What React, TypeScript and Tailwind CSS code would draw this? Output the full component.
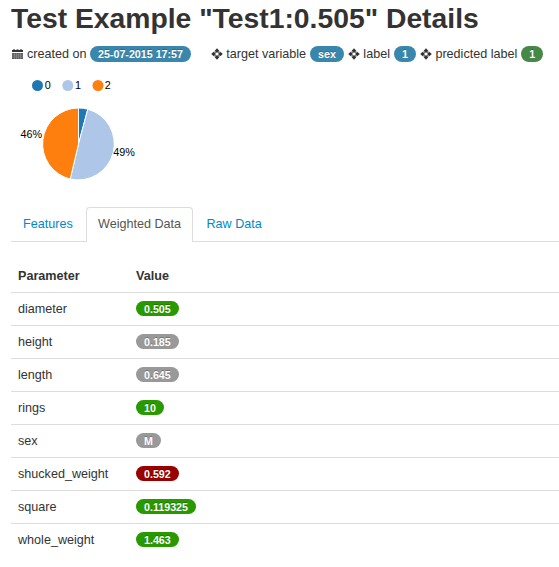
import React from "react";

const rows = [
  { name: "diameter", value: "0.505", color: "bg-[#299900]" },
  { name: "height", value: "0.185", color: "bg-[#999999]" },
  { name: "length", value: "0.645", color: "bg-[#999999]" },
  { name: "rings", value: "10", color: "bg-[#299900]" },
  { name: "sex", value: "M", color: "bg-[#999999]" },
  { name: "shucked_weight", value: "0.592", color: "bg-[#990000]" },
  { name: "square", value: "0.119325", color: "bg-[#299900]" },
  { name: "whole_weight", value: "1.463", color: "bg-[#299900]" },
];

function Badge({ children, className }: { children: React.ReactNode; className: string }) {
  return (
    <span className={`inline-block rounded-full px-2 text-[10.7px] font-bold whitespace-nowrap text-white [text-shadow:0_-1px_0_rgba(0,0,0,0.25)] ${className}`}>
      {children}
    </span>
  );
}

function CalendarIcon() {
  return (
    <svg className="mr-1 h-3 w-[11px] shrink-0" viewBox="0 0 11 12" fill="#333">
      <path d="M1 1h2v1H1zM4.5 1h2v1h-2zM8 1h2v1H8z" fillOpacity=".6" />
      <path d="M0 2h11v2H0z" />
      <path d="M0 5h11v6H0z" fillOpacity=".8" />
      <path d="M2.5 5v6M4.5 5v6M6.5 5v6M8.5 5v6M0 7h11M0 9h11" stroke="#fff" strokeOpacity=".35" strokeWidth=".5" />
    </svg>
  );
}

function MoveIcon() {
  return (
    <svg className="mr-[3.5px] h-3 w-3 shrink-0" viewBox="0 0 12 12" fill="#333">
      <path d="M6 .2l2.3 2.5L6 4.9 3.7 2.7zM6 11.8l2.3-2.5L6 7.1 3.7 9.3zM.2 6l2.5-2.3L4.9 6 2.7 8.3zM11.8 6L9.3 3.7 7.1 6l2.2 2.3z" />
      <path d="M3.5 3.5l1.5 1.5M8.5 3.5L7 5M3.5 8.5L5 7M8.5 8.5L7 7" stroke="#333" strokeOpacity=".65" strokeWidth="1.1" />
    </svg>
  );
}

function Pie() {
  return (
    <svg className="block h-[118px] w-[200px] text-[10.8px]" viewBox="0 74 200 118">
      <circle cx="37.5" cy="85.5" r="5.5" fill="#1f77b4" />
      <circle cx="67.8" cy="85.5" r="5.5" fill="#aec7e8" />
      <circle cx="98" cy="85.5" r="5.5" fill="#ff7f0e" />
      <text x="44.7" y="89">0</text>
      <text x="75" y="89">1</text>
      <text x="104.7" y="89">2</text>
      <g stroke="#fff" strokeWidth="1">
        <path d="M78.5 144V108A36 36 0 0 1 87.8 109.2Z" fill="#1f77b4" />
        <path d="M78.5 144L87.8 109.2A36 36 0 0 1 70.2 179Z" fill="#aec7e8" />
        <path d="M78.5 144L70.2 179A36 36 0 0 1 78.5 108Z" fill="#ff7f0e" />
      </g>
      <text x="20.5" y="138">46%</text>
      <text x="113.3" y="156">49%</text>
    </svg>
  );
}

export default function App() {
  return (
    <div className="h-[567px] w-full overflow-hidden bg-white font-['Liberation_Sans',Arial,sans-serif] text-[12.6px] leading-5 text-[#333]">
      <h1 className="h-[44px] pl-[11px] text-[28.3px] leading-[37px] font-bold whitespace-nowrap">Test Example "Test1:0.505" Details</h1>
      <div className="flex h-5 items-center pl-3 whitespace-nowrap">
        <CalendarIcon />
        <span className="mr-[3.5px]">created on</span>
        <Badge className="mr-[19.7px] h-4 bg-[#3a87ad] leading-4">25-07-2015 17:57</Badge>
        <MoveIcon />
        <span className="mr-1">target variable</span>
        <Badge className="mr-1 h-4 bg-[#3a87ad] leading-4">sex</Badge>
        <MoveIcon />
        <span className="mr-1">label</span>
        <Badge className="mr-1 h-4 bg-[#3a87ad] leading-4">1</Badge>
        <MoveIcon />
        <span className="mr-1">predicted label</span>
        <Badge className="h-4 bg-[#468847] leading-4">1</Badge>
      </div>
      <div className="h-[131px] pt-2.5 text-black"><Pie /></div>
      <div className="mt-[10px] ml-[11px] h-[37px] border-b border-[#ddd]">
        <div className="flex h-[37px] pt-[2px] text-[#0088cc]">
          <div className="w-[75px] pt-[7px] pl-3">Features</div>
          <div className="w-[107px] rounded-t border border-b-0 border-[#ddd] bg-white pt-1.5 pl-[11px] text-[#555]">Weighted Data</div>
          <div className="pt-[7px] pl-[13.5px]">Raw Data</div>
        </div>
      </div>
      <table className="mt-[18px] ml-[11px] w-[548px] table-fixed border-collapse">
        <thead>
          <tr className="h-8 text-left">
            <th className="w-[118px] p-0 pl-[7px]">Parameter</th>
            <th className="p-0 pl-[7px]">Value</th>
          </tr>
        </thead>
        <tbody>
          {rows.map((row) => (
            <tr key={row.name} className="h-[33px] border-t border-[#ddd]">
              <td className="p-0 pl-[7px]">{row.name}</td>
              <td className="p-0 pt-1.5 pl-[7px] align-top">
                <Badge className={`flex h-[15px] w-fit leading-[16px] ${row.color}`}>{row.value}</Badge>
              </td>
            </tr>
          ))}
        </tbody>
      </table>
    </div>
  );
}
